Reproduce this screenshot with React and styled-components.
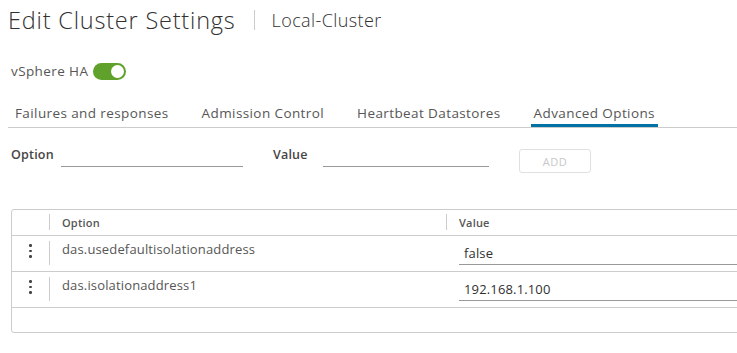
import React from "react";
import styled, { createGlobalStyle } from "styled-components";

const rows = [
  { name: "das.usedefaultisolationaddress", value: "false" },
  { name: "das.isolationaddress1", value: "192.168.1.100" },
];

const tabs = [
  "Failures and responses",
  "Admission Control",
  "Heartbeat Datastores",
  "Advanced Options",
];

export default function App() {
  return (
    <>
      <GlobalStyle />
      <Page>
        <Header>
          <Title>Edit Cluster Settings</Title>
          <Divider />
          <SubTitle>Local-Cluster</SubTitle>
        </Header>

        <HaRow>
          <HaLabel>vSphere HA</HaLabel>
          <Toggle>
            <Knob />
          </Toggle>
        </HaRow>

        <Tabs>
          {tabs.map((t, i) => (
            <Tab key={t} active={i === 3}>
              {t}
            </Tab>
          ))}
        </Tabs>

        <FormRow>
          <FieldLabel>Option</FieldLabel>
          <Field w={182} />
          <FieldLabel>Value</FieldLabel>
          <Field w={166} />
          <AddButton>ADD</AddButton>
        </FormRow>

        <Grid>
          <HeadRow>
            <ActionCell />
            <HeadCell>
              <ColLine />
              Option
            </HeadCell>
            <HeadCell>
              <ColLine />
              Value
            </HeadCell>
          </HeadRow>
          {rows.map((r) => (
            <BodyRow key={r.name}>
              <ActionCell>
                <Dots>
                  <span />
                  <span />
                  <span />
                </Dots>
              </ActionCell>
              <NameCell>
                <ColLine tall />
                {r.name}
              </NameCell>
              <ValueCell>
                <ValueInput>{r.value}</ValueInput>
              </ValueCell>
            </BodyRow>
          ))}
          <Footer />
        </Grid>
      </Page>
    </>
  );
}

// Styled Components ............

const GlobalStyle = createGlobalStyle`
  body {
    margin: 0;
    background: #fff;
    overflow: hidden;
    font-family: "Open Sans", "Noto Sans", sans-serif;
    color: #565656;
  }
`;

const Page = styled.div`
  width: 737px;
  height: 353px;
  overflow: hidden;
  box-sizing: border-box;
  padding: 0 0 0 8px;
`;

const Header = styled.div`
  display: flex;
  align-items: center;
  height: 40px;
`;

const Title = styled.div`
  font-weight: 300;
  font-size: 23.5px;
  letter-spacing: 0.8px;
  color: #313131;
`;

const Divider = styled.div`
  width: 1px;
  height: 20px;
  background: #ccc;
  margin: 0 17px 0 18px;
`;

const SubTitle = styled.div`
  font-size: 18px;
  font-weight: 300;
  letter-spacing: 0.4px;
  color: #313131;
`;

const HaRow = styled.div`
  display: flex;
  align-items: center;
  gap: 5px;
  margin-top: 21px;
  padding-left: 3px;
  height: 20px;
`;

const HaLabel = styled.span`
  font-size: 13.5px;
  letter-spacing: 0.4px;
  color: #565656;
`;

const Toggle = styled.div`
  position: relative;
  width: 33px;
  height: 17px;
  border-radius: 9px;
  background: #60a12b;
`;

const Knob = styled.div`
  position: absolute;
  top: 2px;
  right: 2px;
  width: 13px;
  height: 13px;
  border-radius: 50%;
  background: #fff;
`;

const Tabs = styled.div`
  display: flex;
  gap: 33px;
  margin-top: 19px;
  padding-left: 7px;
  border-bottom: 1px solid #ccc;
`;

const Tab = styled.div`
  font-size: 13.5px;
  letter-spacing: 0.4px;
  color: #565656;
  padding-top: 4px;
  height: 27px;
  box-sizing: border-box;
  box-shadow: ${(p) => (p.active ? "0 -3px 0 #0072a3 inset" : "none")};
  padding-left: ${(p) => (p.active ? "3px" : "0")};
  padding-right: ${(p) => (p.active ? "3px" : "0")};
  margin-left: ${(p) => (p.active ? "-3px" : "0")};
`;

const FormRow = styled.div`
  display: flex;
  align-items: flex-start;
  margin-top: 17px;
  padding-left: 3px;
  height: 28px;
`;

const FieldLabel = styled.span`
  font-size: 12.5px;
  font-weight: 600;
  letter-spacing: 0.2px;
  color: #454545;
  width: 50px;
  line-height: 20px;
`;

const Field = styled.div`
  width: ${(p) => p.w}px;
  height: 21px;
  border-bottom: 1px solid #9a9a9a;
  margin-right: 30px;
`;

const AddButton = styled.div`
  width: 70px;
  height: 22px;
  border: 1px solid #e0e0e0;
  border-radius: 3px;
  margin-top: 4px;
  display: flex;
  align-items: center;
  justify-content: center;
  font-size: 11px;
  letter-spacing: 0.6px;
  color: #c8c8c8;
`;

const Grid = styled.div`
  margin: 36px 0 0 3px;
  border: 1px solid #ccc;
  border-radius: 3px;
  width: 760px;
`;

const HeadRow = styled.div`
  display: grid;
  grid-template-columns: 37px 397px 1fr;
  height: 25px;
  border-bottom: 1px solid #ccc;
`;

const BodyRow = styled.div`
  display: grid;
  grid-template-columns: 37px 397px 1fr;
  height: 35px;
  border-bottom: 1px solid #ccc;
  &:last-of-type {
    border-bottom: 3px solid #ccc;
  }
`;

const ActionCell = styled.div`
  display: flex;
  justify-content: center;
  padding-top: 8px;
`;

const ColLine = styled.div`
  position: absolute;
  left: 0;
  top: ${(p) => (p.tall ? "5px" : "4px")};
  width: 1px;
  height: ${(p) => (p.tall ? "24px" : "16px")};
  background: #ccc;
`;

const HeadCell = styled.div`
  position: relative;
  font-size: 11px;
  font-weight: 600;
  letter-spacing: 0.2px;
  color: #565656;
  padding: 5px 0 0 13px;
`;

const Dots = styled.div`
  display: flex;
  flex-direction: column;
  gap: 3px;
  span {
    width: 2.5px;
    height: 2.5px;
    border-radius: 50%;
    background: #444;
  }
`;

const NameCell = styled.div`
  position: relative;
  font-size: 13px;
  letter-spacing: 0.15px;
  color: #565656;
  padding: 4px 0 0 13px;
`;

const ValueCell = styled.div`
  padding: 5px 0 0 13px;
`;

const ValueInput = styled.div`
  font-size: 13px;
  letter-spacing: 0.15px;
  color: #313131;
  padding: 3px 0 0 5px;
  box-sizing: border-box;
  height: 24px;
  border-bottom: 1px solid #999;
`;

const Footer = styled.div`
  height: 24px;
`;
